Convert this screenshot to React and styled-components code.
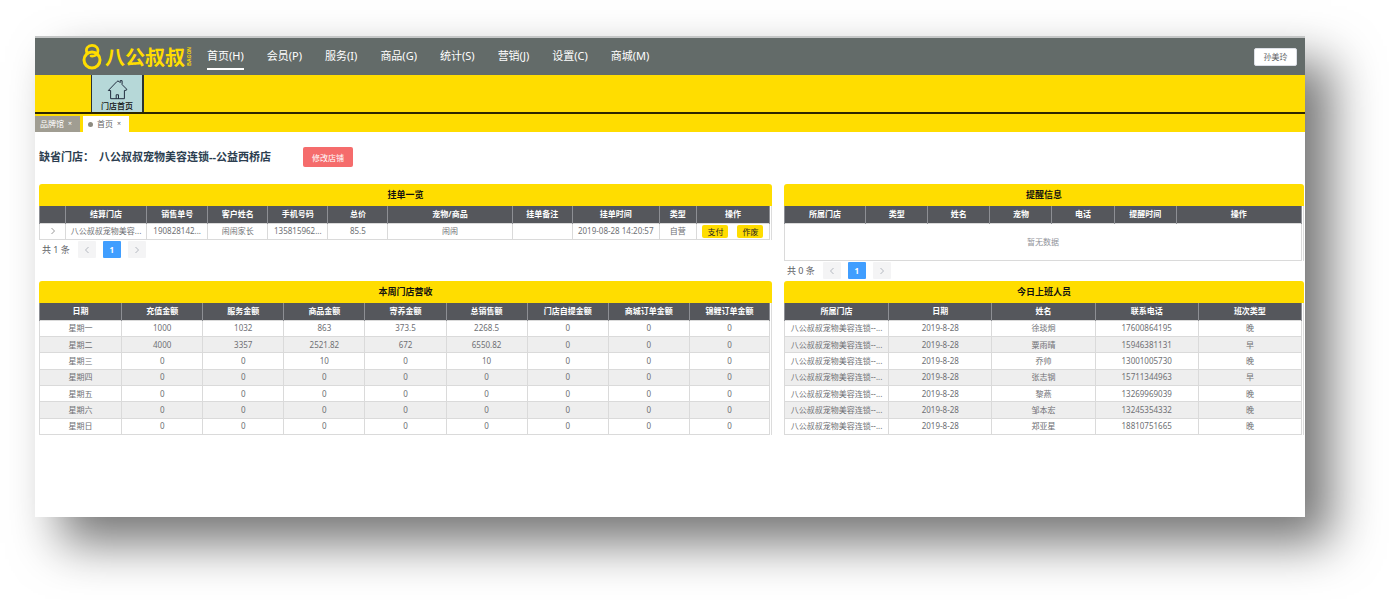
import React, { useState } from "react";
import styled, { createGlobalStyle } from "styled-components";

const GlobalStyle = createGlobalStyle`
  * {
    box-sizing: border-box;
  }
  body {
    margin: 0;
    background: #fff;
    color: #606266;
    font-family: "Noto Sans", "Noto Sans CJK SC", sans-serif;
    font-size: 8px;
    line-height: 12px;
  }
  button {
    font-family: inherit;
    cursor: pointer;
  }
  svg {
    display: block;
    flex: none;
  }
`;

const Page = styled.div`
  min-height: 100vh;
  padding: 36px 84px 83px 35px;
`;

const Screen = styled.div`
  min-height: calc(100vh - 119px);
  background: #fff;
  border-top: 2px solid #c4c6c6;
  box-shadow: 26px 26px 46px rgba(0, 0, 0, 0.54);
`;

const TopBar = styled.header`
  height: 37px;
  display: flex;
  align-items: center;
  padding: 0 8px 0 47px;
  background: #636b69;
`;

const Brand = styled.a`
  display: flex;
  align-items: center;
  width: 125px;
  color: #ffdd00;
  text-decoration: none;
`;

const BrandName = styled.span`
  margin-left: 3px;
  font-family: "Noto Sans CJK SC", sans-serif;
  font-size: 20px;
  line-height: 24px;
  font-weight: 700;
`;

const BrandLatin = styled.span`
  margin-left: 1px;
  writing-mode: vertical-rl;
  transform: rotate(180deg);
  font-family: "Liberation Sans", sans-serif;
  font-size: 5px;
  line-height: 6px;
  font-weight: bold;
`;

const Nav = styled.nav`
  flex: 1;
  display: flex;
  gap: 23px;
`;

const NavLink = styled.a`
  padding: 4px 0;
  border-bottom: 2px solid ${(p) => (p.$active ? "#fff" : "transparent")};
  color: #fff;
  font-size: 11px;
  line-height: 16px;
  text-decoration: none;
  white-space: nowrap;
`;

const UserButton = styled.button`
  width: 43px;
  height: 18px;
  padding: 0;
  border: 1px solid #dcdfe6;
  border-radius: 2px;
  background: #fff;
  color: #606266;
  font-size: 8px;
`;

const Ribbon = styled.div`
  height: 39px;
  display: flex;
  padding-left: 56px;
  background: #ffdd00;
  border-bottom: 2px solid #2c2600;
`;

const RibbonButton = styled.button`
  width: 53px;
  display: flex;
  flex-direction: column;
  align-items: center;
  padding: 4px 0 0;
  border: solid #2b3232;
  border-width: 0 2px 0 1px;
  background: #b6d8d8;
  color: #111;
  font-size: 8px;
  line-height: 12px;
  font-weight: 500;
`;

const Tabs = styled.div`
  height: 18px;
  display: flex;
  align-items: flex-end;
  gap: 3px;
  background: #ffdd00;
`;

const Tab = styled.div`
  height: 16px;
  display: flex;
  align-items: center;
  gap: 4px;
  padding: 0 8px 0 5px;
  background: ${(p) => (p.$active ? "#fff" : "#a09d92")};
  color: ${(p) => (p.$active ? "#666" : "#fff")};
`;

const TabDot = styled.span`
  width: 5px;
  height: 5px;
  border-radius: 50%;
  background: #8d8b80;
`;

const TabClose = styled.button`
  padding: 0;
  border: 0;
  background: none;
  color: inherit;
  font-size: 7px;
  line-height: 12px;
`;

const Content = styled.main`
  padding: 14px 1px 0 4px;
`;

const StoreRow = styled.div`
  display: flex;
  align-items: center;
  height: 22px;
  margin-bottom: 16px;
`;

const StoreTitle = styled.h1`
  margin: 0 32px 0 0;
  display: flex;
  gap: 5px;
  color: #2c3e50;
  font-size: 11px;
  line-height: 20px;
  font-weight: bold;
`;

const EditButton = styled.button`
  width: 50px;
  height: 20px;
  padding: 0;
  border: 0;
  border-radius: 2px;
  background: #f56c6c;
  color: #fff;
  font-size: 8px;
`;

const Panels = styled.div`
  display: grid;
  grid-template-columns: minmax(0, 733fr) minmax(0, 520fr);
  column-gap: 12px;
  row-gap: 1px;
`;

const PanelTitle = styled.h2`
  margin: 0;
  height: 22px;
  border-radius: 3px 3px 0 0;
  background: #ffdd00;
  color: #111;
  font-size: 9px;
  line-height: 22px;
  font-weight: bold;
  text-align: center;
`;

const TableFrame = styled.div`
  padding-right: 1px;
  border: 1px solid #dcdcdc;
  border-width: 0 1px 0 0;
`;

const Table = styled.table`
  width: 100%;
  height: ${(p) => p.$height}px;
  table-layout: fixed;
  border-collapse: collapse;
  text-align: center;
`;

const Th = styled.th`
  height: 17px;
  padding: 0;
  border: 1px solid #8d8f94;
  border-width: 0 1px;
  background: #55575c;
  color: #fff;
  font-weight: bold;
`;

const Tr = styled.tr`
  background: ${(p) => (p.$striped ? "#eee" : "#fff")};
`;

const Td = styled.td`
  padding: 0 2px;
  border: 1px solid #dadada;
  color: #6e7074;
  overflow: hidden;
  text-overflow: ellipsis;
  white-space: nowrap;
`;

const EmptyTd = styled(Td)`
  color: #909399;
`;

const Actions = styled.div`
  display: flex;
  justify-content: center;
  gap: 9px;
`;

const ActionButton = styled.button`
  flex: none;
  width: 26px;
  height: 13px;
  padding: 0;
  border: 0;
  border-radius: 2px;
  background: #ffdd00;
  color: #222;
  font-size: 8px;
  line-height: 13px;
`;

const ExpandButton = styled.button`
  display: block;
  margin: 0 auto;
  padding: 0;
  border: 0;
  background: none;
  color: #999;
`;

const Pager = styled.div`
  display: flex;
  align-items: center;
  gap: 7px;
  height: 19px;
  padding: 0 0 0 3px;
  font-size: 9px;
`;

const PagerTotal = styled.span`
  margin-right: 1px;
`;

const PagerButton = styled.button`
  display: flex;
  align-items: center;
  justify-content: center;
  width: 18px;
  height: 17px;
  padding: 0;
  border: 0;
  border-radius: 1px;
  background: ${(p) => (p.$active ? "#409eff" : "#f4f4f5")};
  color: ${(p) => (p.$active ? "#fff" : "#b4b8c0")};
  font-size: 8px;
  font-weight: bold;
`;

const NAV = [
  "首页(H)",
  "会员(P)",
  "服务(I)",
  "商品(G)",
  "统计(S)",
  "营销(J)",
  "设置(C)",
  "商城(M)",
];

const ORDER_COLUMNS = [
  ["", 26],
  ["结算门店", 81],
  ["销售单号", 61],
  ["客户姓名", 60],
  ["手机号码", 60],
  ["总价", 60],
  ["宠物/商品", 124],
  ["挂单备注", 60],
  ["挂单时间", 87],
  ["类型", 37],
  ["操作", 73],
];

const REMIND_COLUMNS = [
  ["所属门店", 81],
  ["类型", 62],
  ["姓名", 62],
  ["宠物", 62],
  ["电话", 62],
  ["提醒时间", 62],
  ["操作", 125],
];

const INCOME_COLUMNS = [
  ["日期", 82],
  ["充值金额", 81],
  ["服务金额", 81],
  ["商品金额", 81],
  ["寄养金额", 81],
  ["总销售额", 81],
  ["门店自提金额", 81],
  ["商城订单金额", 81],
  ["锦鲤订单金额", 80],
];

const INCOME = [
  ["星期一", "1000", "1032", "863", "373.5", "2268.5", "0", "0", "0"],
  ["星期二", "4000", "3357", "2521.82", "672", "6550.82", "0", "0", "0"],
  ["星期三", "0", "0", "10", "0", "10", "0", "0", "0"],
  ["星期四", "0", "0", "0", "0", "0", "0", "0", "0"],
  ["星期五", "0", "0", "0", "0", "0", "0", "0", "0"],
  ["星期六", "0", "0", "0", "0", "0", "0", "0", "0"],
  ["星期日", "0", "0", "0", "0", "0", "0", "0", "0"],
];

const STAFF_COLUMNS = [
  ["所属门店", 104],
  ["日期", 103],
  ["姓名", 103],
  ["联系电话", 103],
  ["班次类型", 103],
];

const STAFF = [
  ["徐琰炯", "17600864195", "晚"],
  ["粟雨晴", "15946381131", "早"],
  ["乔帅", "13001005730", "晚"],
  ["张志钢", "15711344963", "早"],
  ["黎燕", "13269969039", "晚"],
  ["邹本宏", "13245354332", "晚"],
  ["郑亚星", "18810751665", "晚"],
].map((s) => ["八公叔叔宠物美容连锁--...", "2019-8-28", ...s]);

const Chevron = ({ left }) => (
  <svg width="6" height="8" viewBox="0 0 6 8" fill="none" stroke="currentColor">
    <path d={left ? "M4.5 1 1.5 4l3 3" : "M1.5 1l3 3-3 3"} />
  </svg>
);

const LogoMark = () => (
  <svg width="20" height="27" viewBox="0 0 60 81" fill="none" stroke="#ffdd00">
    <circle cx="30" cy="51" r="24" strokeWidth="9" />
    <path
      d="M15 31C9 16 18 7 30 7s21 9 17 21c-3 9-11 12-20 11"
      strokeWidth="8"
      strokeLinecap="round"
    />
  </svg>
);

const HouseIcon = () => (
  <svg
    width="21"
    height="21"
    viewBox="88 122 62 64"
    fill="none"
    stroke="#1f2a3c"
    strokeWidth="3"
    strokeLinejoin="round"
  >
    <path d="M91 157 117 130q3-4 7 0l3 3v-6h6v12l14 14q2 4-7 4v25H98v-25z" />
    <path d="M115 182v-12h7v12" />
  </svg>
);

const DataTable = ({ columns, height, children }) => (
  <TableFrame>
    <Table $height={height}>
      <colgroup>
        {columns.map(([name, width]) => (
          <col key={name} width={width} />
        ))}
      </colgroup>
      <thead>
        <tr>
          {columns.map(([name]) => (
            <Th key={name} scope="col">
              {name}
            </Th>
          ))}
        </tr>
      </thead>
      <tbody>{children}</tbody>
    </Table>
  </TableFrame>
);

const Rows = ({ rows }) =>
  rows.map((row, i) => (
    <Tr key={i} $striped={i % 2 === 1}>
      {row.map((cell, j) => (
        <Td key={j}>{cell}</Td>
      ))}
    </Tr>
  ));

const Pagination = ({ total }) => (
  <Pager>
    <PagerTotal>共 {total} 条</PagerTotal>
    <PagerButton aria-label="上一页">
      <Chevron left />
    </PagerButton>
    <PagerButton $active>1</PagerButton>
    <PagerButton aria-label="下一页">
      <Chevron />
    </PagerButton>
  </Pager>
);

const App = () => {
  const [active, setActive] = useState(0);

  return (
    <Page>
      <GlobalStyle />
      <Screen>
        <TopBar>
          <Brand href="#">
            <LogoMark />
            <BrandName>八公叔叔</BrandName>
            <BrandLatin>BAGON</BrandLatin>
          </Brand>
          <Nav>
            {NAV.map((item, i) => (
              <NavLink
                key={item}
                href="#"
                $active={i === active}
                onClick={() => setActive(i)}
              >
                {item}
              </NavLink>
            ))}
          </Nav>
          <UserButton>孙美玲</UserButton>
        </TopBar>

        <Ribbon>
          <RibbonButton>
            <HouseIcon />
            门店首页
          </RibbonButton>
        </Ribbon>

        <Tabs>
          <Tab>
            品牌馆
            <TabClose aria-label="关闭品牌馆">×</TabClose>
          </Tab>
          <Tab $active>
            <TabDot />
            首页
            <TabClose aria-label="关闭首页">×</TabClose>
          </Tab>
        </Tabs>

        <Content>
          <StoreRow>
            <StoreTitle>
              <span>缺省门店：</span>
              <span>八公叔叔宠物美容连锁--公益西桥店</span>
            </StoreTitle>
            <EditButton>修改店铺</EditButton>
          </StoreRow>

          <Panels>
            <section>
              <PanelTitle>挂单一览</PanelTitle>
              <DataTable columns={ORDER_COLUMNS} height={34}>
                <Tr>
                  <Td>
                    <ExpandButton aria-label="展开">
                      <Chevron />
                    </ExpandButton>
                  </Td>
                  <Td>八公叔叔宠物美容...</Td>
                  <Td>190828142...</Td>
                  <Td>闹闹家长</Td>
                  <Td>135815962...</Td>
                  <Td>85.5</Td>
                  <Td>闹闹</Td>
                  <Td />
                  <Td>2019-08-28 14:20:57</Td>
                  <Td>自营</Td>
                  <Td>
                    <Actions>
                      <ActionButton>支付</ActionButton>
                      <ActionButton>作废</ActionButton>
                    </Actions>
                  </Td>
                </Tr>
              </DataTable>
              <Pagination total={1} />
            </section>

            <section>
              <PanelTitle>提醒信息</PanelTitle>
              <DataTable columns={REMIND_COLUMNS} height={55}>
                <Tr>
                  <EmptyTd colSpan={REMIND_COLUMNS.length}>暂无数据</EmptyTd>
                </Tr>
              </DataTable>
              <Pagination total={0} />
            </section>

            <section>
              <PanelTitle>本周门店营收</PanelTitle>
              <DataTable columns={INCOME_COLUMNS} height={132}>
                <Rows rows={INCOME} />
              </DataTable>
            </section>

            <section>
              <PanelTitle>今日上班人员</PanelTitle>
              <DataTable columns={STAFF_COLUMNS} height={132}>
                <Rows rows={STAFF} />
              </DataTable>
            </section>
          </Panels>
        </Content>
      </Screen>
    </Page>
  );
};

export default App;
